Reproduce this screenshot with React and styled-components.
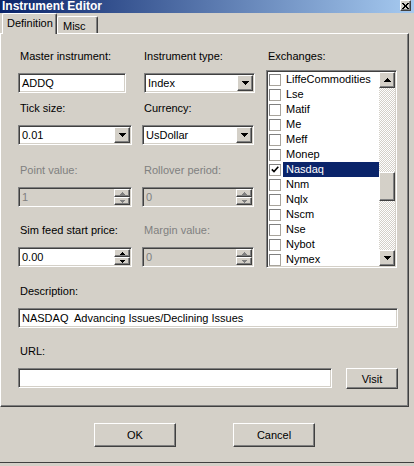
import React from "react";
import styled, { createGlobalStyle } from "styled-components";

const GlobalStyle = createGlobalStyle`
  html, body {
    margin: 0;
    padding: 0;
    background: #d4d0c8;
  }
  body {
    font-family: "Liberation Sans", Arial, sans-serif;
    font-size: 11px;
    color: #000;
  }
  * {
    box-sizing: border-box;
  }
`;

const raised = `
  background: #d4d0c8;
  border: 1px solid;
  border-color: #fff #404040 #404040 #fff;
  box-shadow: inset -1px -1px #808080;
`;

const sunken = `
  border: 1px solid;
  border-color: #808080 #fff #fff #808080;
  box-shadow: inset 1px 1px #404040, inset -1px -1px #d4d0c8;
`;

const Window = styled.div`
  width: 414px;
  height: 463px;
  display: flex;
  flex-direction: column;
  background: #d4d0c8;
  border-bottom: 1px solid #404040;
`;

const TitleBar = styled.div`
  flex: none;
  height: 13px;
  display: flex;
  justify-content: space-between;
  align-items: flex-start;
  padding: 0 3px 0 2px;
  background: linear-gradient(to right, #0a246a, #a6caf0);
`;

const TitleText = styled.span`
  font-size: 12px;
  font-weight: bold;
  line-height: 13px;
  color: #fff;
`;

const CloseButton = styled.div`
  ${raised}
  width: 11px;
  height: 11px;
  display: flex;
  align-items: center;
  justify-content: center;
`;

const TabStrip = styled.div`
  height: 20px;
  display: flex;
  align-items: flex-end;
  padding-left: 2px;
  position: relative;
  z-index: 1;
`;

const Tab = styled.div`
  width: ${(p) => p.$width}px;
  height: ${(p) => (p.$active ? 21 : 17)}px;
  margin-bottom: ${(p) => (p.$active ? -1 : 0)}px;
  padding: 2px 0 0 ${(p) => (p.$active ? 4 : 5)}px;
  line-height: 14px;
  background: #d4d0c8;
  border-top: 1px solid #fff;
  border-left: 1px solid #fff;
  border-right: 1px solid #404040;
  box-shadow: inset -1px 0 #808080;
  border-radius: 2px 2px 0 0;
`;

const Panel = styled.div`
  height: 374px;
  margin-right: 5px;
  border-top: 1px solid #fff;
  border-left: 1px solid #fff;
  border-right: 1px solid #404040;
  border-bottom: 1px solid #404040;
  box-shadow: inset -1px -1px #808080;
  padding: 16px 9px 0 17px;
`;

const FieldGrid = styled.div`
  display: grid;
  grid-template-columns: 114px 114px 131px;
  grid-template-rows: 52px 62px 60px auto;
  column-gap: 10px;
`;

const Field = styled.div`
  display: flex;
  flex-direction: column;
  align-items: flex-start;
  margin-top: ${(p) => p.$top || 0}px;
`;

const ExchangeField = styled(Field)`
  grid-column: 3;
  grid-row: 1 / span 4;
`;

const Label = styled.div`
  line-height: 13px;
  padding-left: 2px;
  margin-bottom: ${(p) => p.$gap ?? 10}px;
  color: ${(p) => (p.$disabled ? "#808080" : "#000")};
`;

const TextBox = styled.div`
  ${sunken}
  width: ${(p) => p.$width}px;
  height: 20px;
  padding: 0 3px;
  line-height: 18px;
  white-space: pre;
  background: #fff;
`;

const Combo = styled.div`
  ${sunken}
  width: ${(p) => p.$width}px;
  height: 20px;
  margin-left: ${(p) => p.$indent || 0}px;
  padding: 1px;
  display: flex;
  background: #fff;
`;

const ComboValue = styled.div`
  flex: 1;
  padding-left: 2px;
  line-height: 16px;
`;

const ArrowButton = styled.div`
  ${raised}
  flex: none;
  width: 16px;
  height: ${(p) => p.$height || 16}px;
  display: flex;
  align-items: center;
  justify-content: center;
`;

const SpinBox = styled(Combo)`
  background: ${(p) => (p.$disabled ? "#d4d0c8" : "#fff")};
  color: ${(p) => (p.$disabled ? "#808080" : "#000")};
`;

const SpinButtons = styled.div`
  display: flex;
  flex-direction: column;
`;

const ListBox = styled.div`
  ${sunken}
  width: 131px;
  height: 198px;
  padding: 1px;
  display: flex;
  background: #fff;
`;

const Items = styled.div`
  flex: 1;
  overflow: hidden;
`;

const Item = styled.div`
  height: 15px;
  display: flex;
  align-items: center;
  padding-left: 1px;
`;

const CheckBox = styled.div`
  flex: none;
  width: 12px;
  height: 12px;
  border: 1px solid;
  border-color: #808080 #a8a49c #a8a49c #808080;
  background: #fff;
  display: flex;
  align-items: center;
  justify-content: center;
`;

const ItemText = styled.div`
  flex: 1;
  height: 15px;
  margin-left: 2px;
  padding-left: 3px;
  line-height: 15px;
  background: ${(p) => (p.$selected ? "#0a246a" : "transparent")};
  color: ${(p) => (p.$selected ? "#fff" : "#000")};
`;

const ScrollBar = styled.div`
  flex: none;
  width: 16px;
  display: flex;
  flex-direction: column;
`;

const Track = styled.div`
  flex: 1;
  padding-top: ${(p) => p.$offset}px;
  background: repeating-conic-gradient(#fff 0 25%, #d4d0c8 0 50%) 0 0 / 2px 2px;
`;

const Thumb = styled.div`
  ${raised}
  height: 29px;
`;

const UrlRow = styled.div`
  display: flex;
  align-items: flex-start;
  gap: 14px;
`;

const ButtonRow = styled.div`
  width: 409px;
  margin-top: 16px;
  display: flex;
  justify-content: center;
  gap: 57px;
`;

const PushButton = styled.div`
  ${raised}
  width: ${(p) => p.$width || 82}px;
  height: ${(p) => p.$height || 24}px;
  display: flex;
  align-items: center;
  justify-content: center;
`;

function Arrow({ dir = "down", small, color = "#000" }) {
  const rows = small ? [5, 3, 1] : [7, 5, 3, 1];
  const w = rows[0];
  const h = rows.length;
  return (
    <svg width={w} height={h} viewBox={`0 0 ${w} ${h}`} shapeRendering="crispEdges">
      {rows.map((r, i) => (
        <rect
          key={i}
          x={(w - r) / 2}
          y={dir === "down" ? i : h - 1 - i}
          width={r}
          height={1}
          fill={color}
        />
      ))}
    </svg>
  );
}

function Spinner({ width, value, disabled }) {
  const color = disabled ? "#808080" : "#000";
  return (
    <SpinBox $width={width} $disabled={disabled}>
      <ComboValue>{value}</ComboValue>
      <SpinButtons>
        <ArrowButton $height={8}>
          <Arrow dir="up" small color={color} />
        </ArrowButton>
        <ArrowButton $height={8}>
          <Arrow dir="down" small color={color} />
        </ArrowButton>
      </SpinButtons>
    </SpinBox>
  );
}

function Dropdown({ width, value, indent }) {
  return (
    <Combo $width={width} $indent={indent}>
      <ComboValue>{value}</ComboValue>
      <ArrowButton>
        <Arrow />
      </ArrowButton>
    </Combo>
  );
}

const exchanges = [
  "LiffeCommodities",
  "Lse",
  "Matif",
  "Me",
  "Meff",
  "Monep",
  "Nasdaq",
  "Nnm",
  "Nqlx",
  "Nscm",
  "Nse",
  "Nybot",
  "Nymex",
];

export default function App() {
  return (
    <>
      <GlobalStyle />
      <Window>
        <TitleBar>
          <TitleText>Instrument Editor</TitleText>
          <CloseButton>
            <svg width="7" height="6" viewBox="0 0 7 6" shapeRendering="crispEdges">
              <path d="M0 0h2v1h1v1h1V1h1V0h2v1H6v1H5v2h1v1h1v1H5V5H4V4H3v1H2v1H0V5h1V4h1V2H1V1H0z" fill="#000" />
            </svg>
          </CloseButton>
        </TitleBar>

        <TabStrip>
          <Tab $active $width={55}>Definition</Tab>
          <Tab $width={41}>Misc</Tab>
        </TabStrip>

        <Panel>
          <FieldGrid>
            <Field>
              <Label>Master instrument:</Label>
              <TextBox $width={108}>ADDQ</TextBox>
            </Field>
            <Field>
              <Label>Instrument type:</Label>
              <Dropdown width={111} indent={2} value="Index" />
            </Field>
            <ExchangeField>
              <Label $gap={7}>Exchanges:</Label>
              <ListBox>
                <Items>
                  {exchanges.map((name) => (
                    <Item key={name}>
                      <CheckBox>
                        {name === "Nasdaq" && (
                          <svg width="8" height="7" viewBox="0 0 8 7">
                            <path d="M0.8 3.4 L3 5.6 L7.3 0.8" stroke="#000" strokeWidth="1.6" fill="none" />
                          </svg>
                        )}
                      </CheckBox>
                      <ItemText $selected={name === "Nasdaq"}>{name}</ItemText>
                    </Item>
                  ))}
                </Items>
                <ScrollBar>
                  <ArrowButton>
                    <Arrow dir="up" />
                  </ArrowButton>
                  <Track $offset={84}>
                    <Thumb />
                  </Track>
                  <ArrowButton>
                    <Arrow />
                  </ArrowButton>
                </ScrollBar>
              </ListBox>
            </ExchangeField>

            <Field>
              <Label>Tick size:</Label>
              <Dropdown width={114} value="0.01" />
            </Field>
            <Field>
              <Label>Currency:</Label>
              <Dropdown width={112} value="UsDollar" />
            </Field>

            <Field>
              <Label $disabled>Point value:</Label>
              <Spinner width={114} value="1" disabled />
            </Field>
            <Field>
              <Label $disabled>Rollover period:</Label>
              <Spinner width={112} value="0" disabled />
            </Field>

            <Field>
              <Label>Sim feed start price:</Label>
              <Spinner width={114} value="0.00" />
            </Field>
            <Field>
              <Label $disabled>Margin value:</Label>
              <Spinner width={112} value="0" disabled />
            </Field>
          </FieldGrid>

          <Field $top={17}>
            <Label>Description:</Label>
            <TextBox $width={380}>NASDAQ  Advancing Issues/Declining Issues</TextBox>
          </Field>

          <Field $top={17}>
            <Label>URL:</Label>
            <UrlRow>
              <TextBox $width={314} />
              <PushButton $width={52} $height={21}>Visit</PushButton>
            </UrlRow>
          </Field>
        </Panel>

        <ButtonRow>
          <PushButton>OK</PushButton>
          <PushButton>Cancel</PushButton>
        </ButtonRow>
      </Window>
    </>
  );
}
